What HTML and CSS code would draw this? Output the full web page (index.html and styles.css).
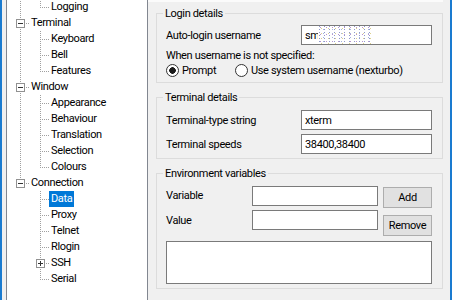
FILE: index.html
```html
<!DOCTYPE html>
<html>
<head>
<meta charset="utf-8">
<link rel="stylesheet" href="styles.css">
</head>
<body>
<div class="win">
  <div class="edge"></div>
  <div class="gutter"></div>
  <div class="tree">
    <ul class="nodes">
      <li class="row"><span class="c v"></span><span class="c l"></span><span class="lbl">Logging</span></li>
      <li class="row"><span class="c t"><span class="box"></span></span><span class="lbl">Terminal</span></li>
      <li class="row"><span class="c v"></span><span class="c t"></span><span class="lbl">Keyboard</span></li>
      <li class="row"><span class="c v"></span><span class="c t"></span><span class="lbl">Bell</span></li>
      <li class="row"><span class="c v"></span><span class="c l"></span><span class="lbl">Features</span></li>
      <li class="row"><span class="c t"><span class="box"></span></span><span class="lbl">Window</span></li>
      <li class="row"><span class="c v"></span><span class="c t"></span><span class="lbl">Appearance</span></li>
      <li class="row"><span class="c v"></span><span class="c t"></span><span class="lbl">Behaviour</span></li>
      <li class="row"><span class="c v"></span><span class="c t"></span><span class="lbl">Translation</span></li>
      <li class="row"><span class="c v"></span><span class="c t"></span><span class="lbl">Selection</span></li>
      <li class="row"><span class="c v"></span><span class="c l"></span><span class="lbl">Colours</span></li>
      <li class="row"><span class="c l"><span class="box"></span></span><span class="lbl">Connection</span></li>
      <li class="row"><span class="c"></span><span class="c t"></span><span class="lbl sel">Data</span></li>
      <li class="row"><span class="c"></span><span class="c t"></span><span class="lbl">Proxy</span></li>
      <li class="row"><span class="c"></span><span class="c t"></span><span class="lbl">Telnet</span></li>
      <li class="row"><span class="c"></span><span class="c t"></span><span class="lbl">Rlogin</span></li>
      <li class="row"><span class="c"></span><span class="c t"><span class="box plus"></span></span><span class="lbl">SSH</span></li>
      <li class="row"><span class="c"></span><span class="c l"></span><span class="lbl">Serial</span></li>
    </ul>
  </div>
  <div class="panel">
    <div class="banner"></div>
    <fieldset class="group login">
      <legend>Login details</legend>
      <div class="pair">
        <span>Auto-login username</span>
        <div class="field">sm<span class="noise"></span></div>
      </div>
      <div class="note">When username is not specified:</div>
      <div class="radios">
        <span class="opt first"><span class="radio on"></span>Prompt</span>
        <span class="opt"><span class="radio"></span>Use system username (nexturbo)</span>
      </div>
    </fieldset>
    <fieldset class="group term">
      <legend>Terminal details</legend>
      <div class="pairs">
        <span>Terminal-type string</span>
        <div class="field">xterm</div>
        <span>Terminal speeds</span>
        <div class="field">38400,38400</div>
      </div>
    </fieldset>
    <fieldset class="group env">
      <legend>Environment variables</legend>
      <div class="envgrid">
        <span class="elabel">Variable</span>
        <div class="field"></div>
        <div class="btn add">Add</div>
        <span class="elabel second">Value</span>
        <div class="field"></div>
        <div class="btn remove">Remove</div>
      </div>
      <div class="list"></div>
    </fieldset>
  </div>
  <div class="edge"></div>
</div>
</body>
</html>
```
FILE: styles.css
```css
* { box-sizing: border-box; }
html, body { margin: 0; padding: 0; }
body {
  width: 452px;
  height: 300px;
  overflow: hidden;
  background: #f0f0f0;
  font-family: Roboto, "Liberation Sans", sans-serif;
  font-size: 11px;
  letter-spacing: -0.35px;
  color: #000;
}
.win { display: flex; height: 300px; }
.edge { width: 2px; flex: none; background: #1a7bd0; }
.gutter { width: 4px; flex: none; }

/* tree */
.tree {
  width: 142px;
  flex: none;
  background: #fff;
  border-left: 1px solid #828790;
  border-right: 1px solid #828790;
  padding-left: 3px;
  overflow: hidden;
}
.nodes { list-style: none; margin: -1px 0 0; padding: 0; }
.row { display: flex; height: 16px; }
.c { width: 20px; height: 16px; flex: none; padding: 4px 0 0 6px; }
.v {
  background: repeating-linear-gradient(to bottom, #a0a0a0 0 1px, transparent 1px 2px) 10px 0 / 1px 16px no-repeat;
}
.t {
  background:
    repeating-linear-gradient(to right, #a0a0a0 0 1px, transparent 1px 2px) 10px 8px / 9px 1px no-repeat,
    repeating-linear-gradient(to bottom, #a0a0a0 0 1px, transparent 1px 2px) 10px 0 / 1px 16px no-repeat;
}
.l {
  background:
    repeating-linear-gradient(to right, #a0a0a0 0 1px, transparent 1px 2px) 10px 8px / 9px 1px no-repeat,
    repeating-linear-gradient(to bottom, #a0a0a0 0 1px, transparent 1px 2px) 10px 0 / 1px 9px no-repeat;
}
.box {
  display: block;
  width: 9px;
  height: 9px;
  border: 1px solid #919191;
  background: linear-gradient(#333, #333) center / 5px 1px no-repeat, #fff;
}
.box.plus {
  background:
    linear-gradient(#333, #333) center / 5px 1px no-repeat,
    linear-gradient(#333, #333) center / 1px 5px no-repeat,
    #fff;
}
.lbl { margin-left: -1px; padding: 0 2px; line-height: 16px; white-space: nowrap; }
.lbl.sel { background: #0078d7; color: #fff; }

/* panel */
.panel { width: 302px; flex: none; padding-right: 7px; }
.banner { height: 2px; background: #fbfbfb; }
.group {
  margin: 7px 0 0 8px;
  padding: 5px 10px 4px 9px;
  border: 1px solid #dcdcdc;
  min-width: 0;
}
.group.login { margin-top: 4px; padding-top: 4px; }
legend { padding: 0 2px; margin-left: -3px; line-height: 15px; }

.pair, .pairs {
  display: grid;
  grid-template-columns: 135px 131px;
  align-items: center;
}
.pairs { row-gap: 4px; }
.field {
  height: 20px;
  border: 1px solid #7a7a7a;
  background: #fff;
  padding-left: 3px;
  display: flex;
  align-items: center;
  white-space: nowrap;
  overflow: hidden;
}
.noise {
  width: 55px;
  height: 18px;
  flex: none;
  margin-left: -2px;
  background:
    linear-gradient(#8a93c8, #8a93c8) 1px 2px / 1px 1px,
    linear-gradient(#d9cf86, #d9cf86) 4px 5px / 1px 1px,
    linear-gradient(#b48fcc, #b48fcc) 2px 8px / 1px 1px,
    linear-gradient(#9fb0d8, #9fb0d8) 6px 1px / 1px 1px;
  background-size: 1px 1px;
  background-repeat: no-repeat;
  background-color: #fff;
  background-image:
    repeating-linear-gradient(to right, transparent 0 3px, rgba(255,255,255,0) 3px 4px),
    radial-gradient(circle at 0.5px 0.5px, #8f98cc 0.6px, transparent 0.7px),
    radial-gradient(circle at 0.5px 0.5px, #dcd08e 0.6px, transparent 0.7px),
    radial-gradient(circle at 0.5px 0.5px, #b994cf 0.6px, transparent 0.7px),
    radial-gradient(circle at 0.5px 0.5px, #a6b4dc 0.6px, transparent 0.7px);
  background-size: 4px 4px, 5px 3px, 7px 5px, 6px 7px, 9px 4px;
  background-position: 0 0, 1px 0, 3px 2px, 2px 1px, 5px 3px;
  background-repeat: repeat;
}
.note { margin-top: 3px; line-height: 15px; }
.radios { display: flex; height: 15px; align-items: center; }
.opt { display: flex; align-items: center; gap: 3px; white-space: nowrap; }
.opt.first { width: 69px; }
.radio {
  width: 13px;
  height: 13px;
  flex: none;
  border: 1px solid #333;
  border-radius: 50%;
  background: #fff;
}
.radio.on { background: radial-gradient(circle, #1a1a1a 0 3px, #fff 3.6px); }

.envgrid {
  display: grid;
  grid-template-columns: 86px 126px 54px;
  row-gap: 2px;
  align-items: start;
}
.elabel { line-height: 20px; }
.elabel.second { padding-top: 1px; }
.btn {
  height: 21px;
  margin-left: 5px;
  border: 1px solid #adadad;
  background: #e1e1e1;
  display: flex;
  align-items: center;
  justify-content: center;
}
.btn.add { margin-top: 1px; }
.btn.remove { margin-top: 5px; }
.list {
  margin-top: 5px;
  height: 43px;
  border: 1px solid #7a7a7a;
  background: #fff;
}
```
